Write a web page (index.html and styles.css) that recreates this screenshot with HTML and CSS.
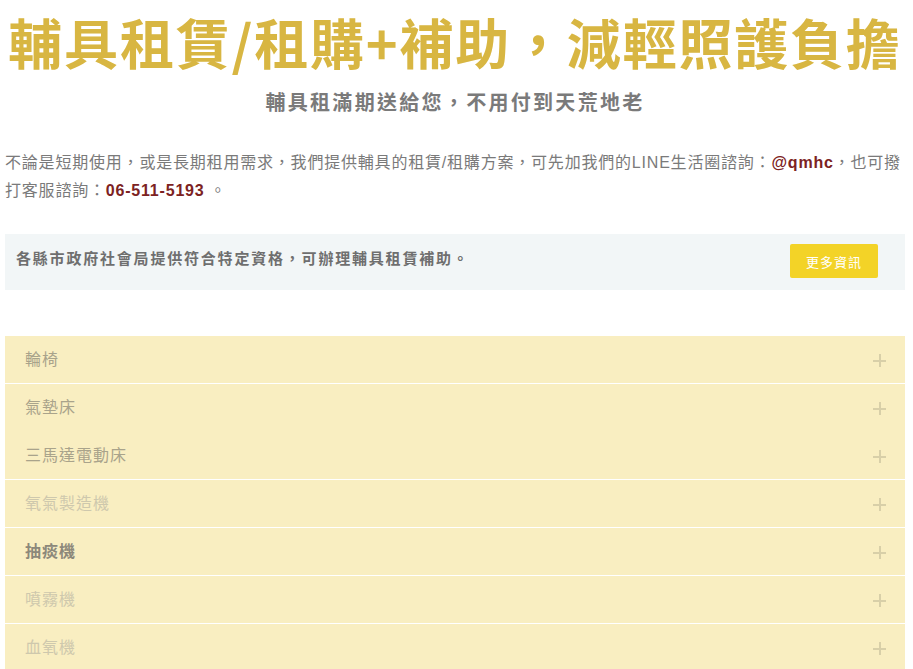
FILE: index.html
```html
<!DOCTYPE html>
<html lang="zh-Hant">
<head>
<meta charset="utf-8">
<title>輔具租賃/租購+補助</title>
<link rel="stylesheet" href="styles.css">
</head>
<body>
<div class="page">
  <h1 class="title">輔具租賃/租購+補助，減輕照護負擔</h1>
  <h2 class="subtitle">輔具租滿期送給您，不用付到天荒地老</h2>
  <p class="intro">不論是短期使用，或是長期租用需求，我們提供輔具的租賃/租購方案，可先加我們的LINE生活圈諮詢：<b class="hl">@qmhc</b>，也可撥打客服諮詢：<b class="hl">06-511-5193</b> 。</p>
  <div class="notice">
    <p class="notice-text">各縣市政府社會局提供符合特定資格，可辦理輔具租賃補助。</p>
    <a class="btn" href="#">更多資訊</a>
  </div>
  <ul class="acc">
    <li class="acc-item"><span class="acc-label">輪椅</span><span class="plus"></span></li>
    <li class="acc-item no-line"><span class="acc-label">氣墊床</span><span class="plus"></span></li>
    <li class="acc-item"><span class="acc-label">三馬達電動床</span><span class="plus"></span></li>
    <li class="acc-item"><span class="acc-label faint">氧氣製造機</span><span class="plus"></span></li>
    <li class="acc-item"><span class="acc-label dark">抽痰機</span><span class="plus"></span></li>
    <li class="acc-item"><span class="acc-label faint">噴霧機</span><span class="plus"></span></li>
    <li class="acc-item"><span class="acc-label faint">血氧機</span><span class="plus"></span></li>
  </ul>
</div>
</body>
</html>
```
FILE: styles.css
```css
html, body {
  margin: 0;
  padding: 0;
  background: #ffffff;
}
body {
  font-family: "Liberation Sans", "Noto Sans CJK TC", sans-serif;
  color: #777777;
}
.page {
  width: 900px;
  margin: 0 0 0 5px;
}
.title {
  margin: 0;
  padding-top: 9px;
  font-family: "Noto Sans CJK TC", sans-serif;
  font-size: 54px;
  line-height: 65px;
  font-weight: 700;
  letter-spacing: 1.8px;
  color: #d8b642;
  text-align: center;
  white-space: nowrap;
}
.subtitle {
  margin: 13px 0 0;
  font-family: "Noto Sans CJK TC", sans-serif;
  font-size: 20px;
  line-height: 30px;
  font-weight: 700;
  letter-spacing: 2.3px;
  color: #7a7a7a;
  text-align: center;
}
.intro {
  margin: 32px -8px 0 0;
  font-size: 16px;
  line-height: 28px;
  letter-spacing: 0.8px;
  color: #7a7a7a;
}
.hl {
  color: #7c2222;
  font-weight: 700;
}
.notice {
  margin-top: 29px;
  height: 56px;
  box-sizing: border-box;
  background: #f2f6f7;
  display: flex;
  align-items: flex-start;
  justify-content: space-between;
  padding: 0 27px 0 11px;
}
.notice-text {
  margin: 12px 0 0;
  font-family: "Noto Sans CJK TC", sans-serif;
  font-size: 15px;
  line-height: 24px;
  font-weight: 700;
  letter-spacing: 1.8px;
  color: #6f6f6f;
}
.btn {
  margin-top: 10px;
  width: 88px;
  height: 34px;
  border-radius: 2px;
  background: #f3d327;
  color: #ffffff;
  font-family: "Noto Sans CJK TC", sans-serif;
  font-size: 13px;
  letter-spacing: 1px;
  text-decoration: none;
  display: flex;
  align-items: center;
  justify-content: center;
}
.acc {
  list-style: none;
  margin: 46px 0 0;
  padding: 0;
}
.acc-item {
  height: 47px;
  box-sizing: content-box;
  border-bottom: 1px solid #ffffff;
  background: #f9eec1;
  display: flex;
  align-items: center;
  justify-content: space-between;
  padding: 0 19px 0 20px;
}
.acc-item.no-line {
  border-bottom-color: #f9eec1;
}
.acc-label {
  font-family: "Noto Sans CJK TC", sans-serif;
  font-size: 16px;
  line-height: 24px;
  letter-spacing: 1px;
  color: #a9a38b;
  margin-bottom: 4px;
}
.acc-label.faint {
  color: #cec8ad;
}
.acc-label.dark {
  color: #8c887a;
  font-weight: 700;
}
.plus {
  position: relative;
  width: 13px;
  height: 13px;
  margin-top: 2px;
}
.plus::before, .plus::after {
  content: "";
  position: absolute;
  background: #d8cfa8;
}
.plus::before {
  left: 0;
  top: 5.5px;
  width: 13px;
  height: 2px;
}
.plus::after {
  left: 5.5px;
  top: 0;
  width: 2px;
  height: 13px;
}
```
